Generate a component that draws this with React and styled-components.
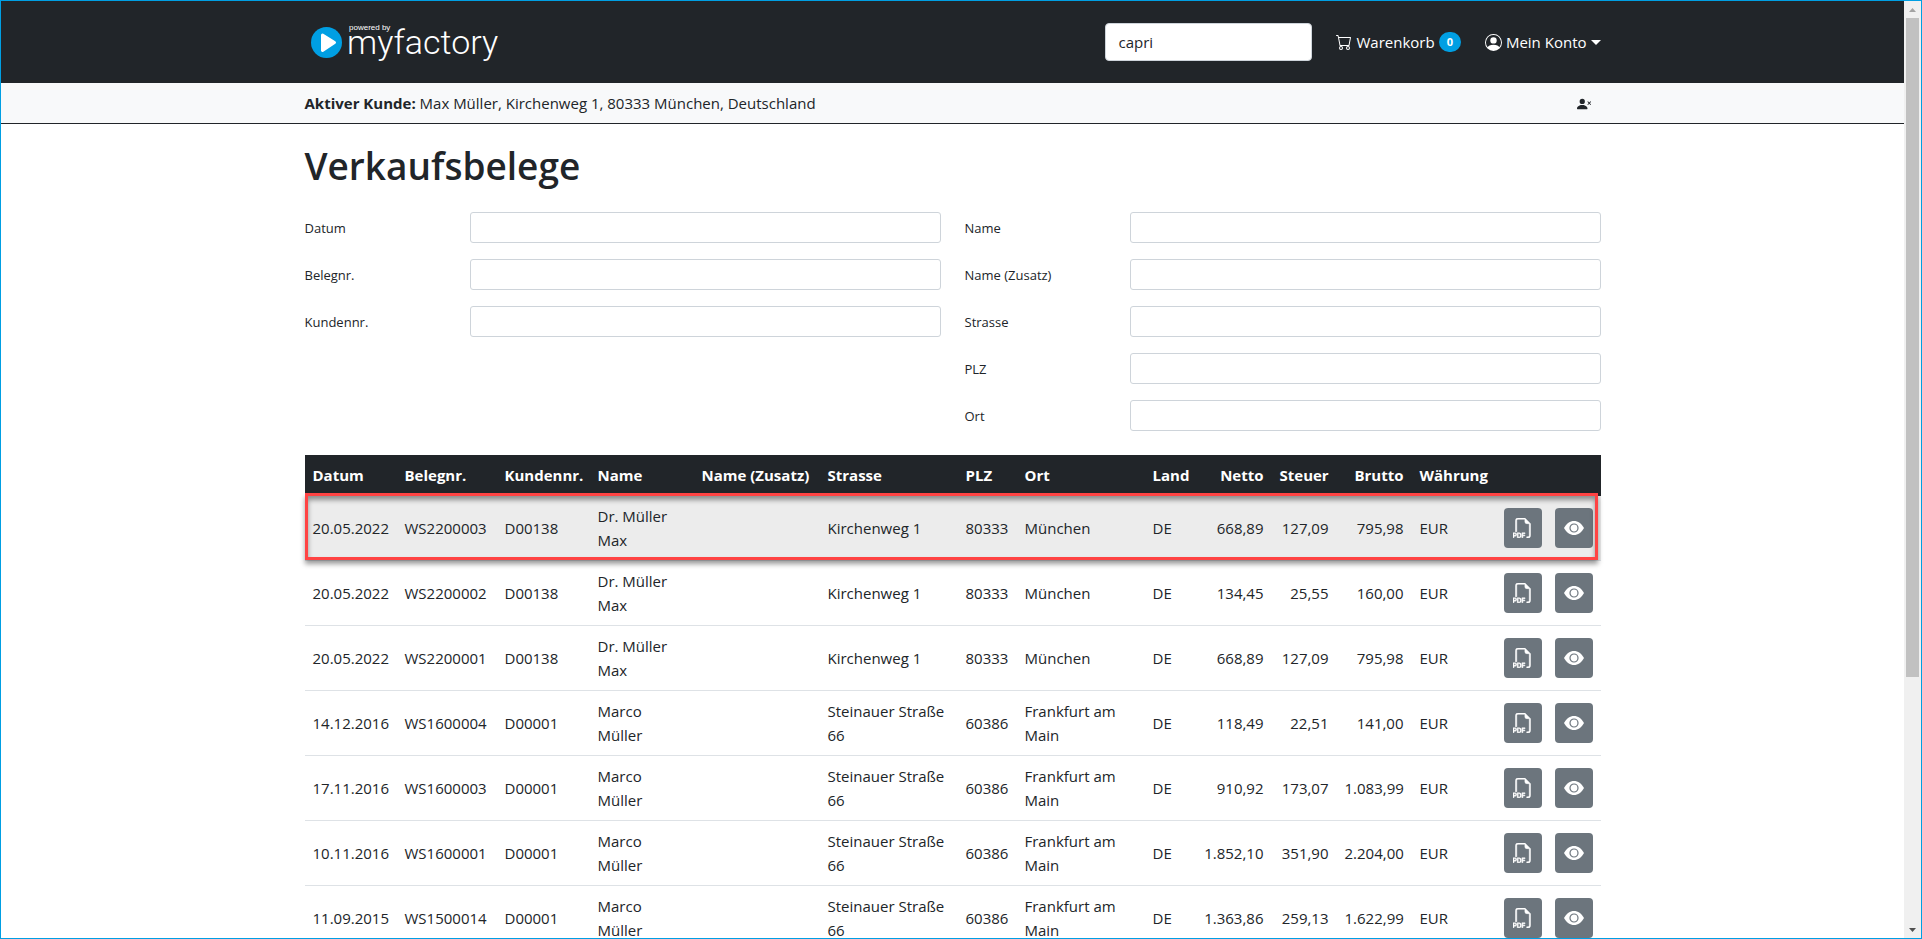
import { useState } from "react";
import styled, { createGlobalStyle } from "styled-components";
import {
  BsCart,
  BsFiletypePdf,
  BsPersonCircle,
  BsPersonXFill,
} from "react-icons/bs";

const GlobalStyle = createGlobalStyle`
  *, *::before, *::after {
    box-sizing: border-box;
  }

  body {
    margin: 0;
    background: #fff;
    color: #212529;
    font-family: "Open Sans", "Noto Sans", sans-serif;
    font-size: 15px;
    line-height: 24px;
  }

  input, button {
    font: inherit;
    color: inherit;
  }
`;

const StyledWindow = styled.div`
  display: flex;
  height: 100vh;
  border: 1px solid #009fe3;
`;

const StyledPage = styled.div`
  flex: 1;
  min-width: 0;
  overflow-y: auto;
  scrollbar-width: none;
`;

const StyledContainer = styled.div`
  width: 100%;
  max-width: 1320px;
  margin: 0 auto;
  padding: 0 12px;
`;

const StyledHeader = styled.header`
  background: #212529;
  color: #fff;
`;

const StyledNavbar = styled(StyledContainer)`
  display: flex;
  align-items: center;
  height: 82px;
  padding-bottom: 14px;
  padding-top: 14px;
`;

const StyledLogo = styled.a`
  display: flex;
  margin-right: auto;
`;

const StyledSearch = styled.input`
  width: 207px;
  height: 38px;
  margin-right: 24px;
  padding: 6px 12px;
  border: 1px solid #ced4da;
  border-radius: 4px;
  background: #fff;
  color: #212529;
`;

const StyledNavLink = styled.a`
  display: flex;
  align-items: center;
  gap: 4px;
  color: #fff;
  text-decoration: none;

  & + & {
    margin-left: 24px;
  }
`;

const StyledBadge = styled.span`
  padding: 4px 8px;
  border-radius: 10px;
  background: #009fe3;
  font-size: 11px;
  font-weight: 700;
  line-height: 12px;
`;

const StyledCaret = styled.span`
  border-top: 5px solid;
  border-right: 5px solid transparent;
  border-left: 5px solid transparent;
`;

const StyledCustomerBar = styled.div`
  border-bottom: 1px solid #212529;
  background: #f8f9fa;
`;

const StyledCustomer = styled(StyledContainer)`
  display: flex;
  align-items: center;
  justify-content: space-between;
  height: 40px;
`;

const StyledClearButton = styled.button`
  display: flex;
  padding: 6px 10px 4px;
  border: 0;
  background: none;
`;

const StyledHeading = styled.h1`
  margin: 0;
  padding: 18px 0 22px;
  font-size: 37px;
  font-weight: 600;
  line-height: 48px;
`;

const StyledFilters = styled.form`
  display: grid;
  grid-template-columns: 1fr 1fr;
  gap: 24px;
  margin-bottom: 24px;
`;

const StyledFilterColumn = styled.div`
  display: flex;
  flex-direction: column;
  gap: 16px;
`;

const StyledField = styled.div`
  display: grid;
  grid-template-columns: 165px 1fr;
  align-items: center;
  font-size: 13px;
`;

const StyledInput = styled.input`
  width: 100%;
  height: 31px;
  padding: 4px 8px;
  border: 1px solid #ced4da;
  border-radius: 3px;
`;

const StyledTableWrapper = styled.div`
  position: relative;
  margin-bottom: 24px;
`;

const StyledTable = styled.table`
  width: 100%;
  table-layout: fixed;
  border-collapse: separate;
  border-spacing: 0;
`;

const StyledCol = styled.col`
  width: ${({ $width }) => $width}px;
`;

const StyledTh = styled.th`
  padding: 8px;
  border-bottom: 1px solid #212529;
  background: #212529;
  color: #fff;
  font-weight: 700;
  text-align: ${({ $right }) => ($right ? "right" : "left")};
  white-space: nowrap;
`;

const StyledTd = styled.td`
  padding: 8px;
  border-bottom: 1px solid #dee2e6;
  text-align: ${({ $right }) => ($right ? "right" : "left")};
  vertical-align: middle;
`;

const StyledRow = styled.tr`
  background: ${({ $active }) => ($active ? "#ececec" : "#fff")};
`;

const StyledActions = styled.div`
  display: flex;
  gap: 13px;
`;

const StyledIconButton = styled.button`
  display: flex;
  align-items: center;
  justify-content: center;
  width: 38px;
  height: 40px;
  padding: 0;
  border: 0;
  border-radius: 4px;
  background: #6c757d;
  color: #fff;
  cursor: pointer;

  &:hover {
    background: #5c636a;
  }
`;

const StyledPdfIcon = styled(BsFiletypePdf)`
  stroke: currentColor;
  stroke-width: 0.4px;
`;

// sits on top of the first row
const StyledMarker = styled.div`
  position: absolute;
  top: 38px;
  left: 0;
  right: 3px;
  height: 67px;
  border: 3px solid #ff4343;
  box-shadow:
    0 4px 5px rgba(0, 0, 0, 0.4),
    inset 0 4px 5px rgba(0, 0, 0, 0.4);
  pointer-events: none;
`;

const StyledScrollbar = styled.div`
  display: flex;
  flex-direction: column;
  align-items: center;
  width: 17px;
  background: #f0f0f0;
`;

const StyledArrow = styled.div`
  display: flex;
  align-items: center;
  justify-content: center;
  height: 17px;
  color: ${({ $disabled }) => ($disabled ? "#a3a3a3" : "#505050")};
`;

const StyledTrack = styled.div`
  flex: 1;
  width: 13px;
`;

const StyledThumb = styled.div`
  height: 73%;
  background: #c1c1c1;
`;

const leftFilters = [
  { id: "datum", label: "Datum" },
  { id: "belegnr", label: "Belegnr." },
  { id: "kundennr", label: "Kundennr." },
];

const rightFilters = [
  { id: "name", label: "Name" },
  { id: "zusatz", label: "Name (Zusatz)" },
  { id: "strasse", label: "Strasse" },
  { id: "plz", label: "PLZ" },
  { id: "ort", label: "Ort" },
];

const columns = [
  { key: "datum", label: "Datum", width: 92 },
  { key: "belegnr", label: "Belegnr.", width: 100 },
  { key: "kundennr", label: "Kundennr.", width: 93 },
  { key: "name", label: "Name", width: 104 },
  { key: "zusatz", label: "Name (Zusatz)", width: 126 },
  { key: "strasse", label: "Strasse", width: 138 },
  { key: "plz", label: "PLZ", width: 59 },
  { key: "ort", label: "Ort", width: 128 },
  { key: "land", label: "Land", width: 46 },
  { key: "netto", label: "Netto", width: 81, right: true },
  { key: "steuer", label: "Steuer", width: 65, right: true },
  { key: "brutto", label: "Brutto", width: 75, right: true },
  { key: "waehrung", label: "Währung", width: 84 },
];

const max = {
  kundennr: "D00138",
  name: "Dr. Müller Max",
  strasse: "Kirchenweg 1",
  plz: "80333",
  ort: "München",
  land: "DE",
  waehrung: "EUR",
};

const marco = {
  kundennr: "D00001",
  name: "Marco Müller",
  strasse: "Steinauer Straße 66",
  plz: "60386",
  ort: "Frankfurt am Main",
  land: "DE",
  waehrung: "EUR",
};

const belege = [
  { ...max, datum: "20.05.2022", belegnr: "WS2200003", netto: "668,89", steuer: "127,09", brutto: "795,98" },
  { ...max, datum: "20.05.2022", belegnr: "WS2200002", netto: "134,45", steuer: "25,55", brutto: "160,00" },
  { ...max, datum: "20.05.2022", belegnr: "WS2200001", netto: "668,89", steuer: "127,09", brutto: "795,98" },
  { ...marco, datum: "14.12.2016", belegnr: "WS1600004", netto: "118,49", steuer: "22,51", brutto: "141,00" },
  { ...marco, datum: "17.11.2016", belegnr: "WS1600003", netto: "910,92", steuer: "173,07", brutto: "1.083,99" },
  { ...marco, datum: "10.11.2016", belegnr: "WS1600001", netto: "1.852,10", steuer: "351,90", brutto: "2.204,00" },
  { ...marco, datum: "11.09.2015", belegnr: "WS1500014", netto: "1.363,86", steuer: "259,13", brutto: "1.622,99" },
];

export default function App() {
  const [search, setSearch] = useState("capri");

  return (
    <StyledWindow>
      <GlobalStyle />
      <StyledPage>
        <StyledHeader>
          <StyledNavbar as="nav">
            <StyledLogo href="#" aria-label="myfactory">
              <Logo />
            </StyledLogo>
            <StyledSearch
              type="text"
              aria-label="Suche"
              value={search}
              onChange={(event) => setSearch(event.target.value)}
            />
            <StyledNavLink href="#">
              <BsCart size={16} />
              Warenkorb
              <StyledBadge>0</StyledBadge>
            </StyledNavLink>
            <StyledNavLink href="#">
              <BsPersonCircle size={17} />
              Mein Konto
              <StyledCaret />
            </StyledNavLink>
          </StyledNavbar>
        </StyledHeader>

        <StyledCustomerBar>
          <StyledCustomer>
            <span>
              <strong>Aktiver Kunde:</strong> Max Müller, Kirchenweg 1, 80333
              München, Deutschland
            </span>
            <StyledClearButton type="button" aria-label="Kunde abwählen">
              <BsPersonXFill size={14} />
            </StyledClearButton>
          </StyledCustomer>
        </StyledCustomerBar>

        <StyledContainer as="main">
          <StyledHeading>Verkaufsbelege</StyledHeading>
          <StyledFilters>
            <FilterColumn fields={leftFilters} />
            <FilterColumn fields={rightFilters} />
          </StyledFilters>
          <BelegTable />
        </StyledContainer>
      </StyledPage>
      <Scrollbar />
    </StyledWindow>
  );
}

function Logo() {
  return (
    <svg width="200" height="54" viewBox="0 0 200 54">
      <circle cx="21.5" cy="27.5" r="15.5" fill="#009fe3" />
      <path
        d="M17.5 20 L29.5 27.5 L17.5 35.5 Z"
        fill="#fff"
        stroke="#fff"
        strokeWidth="3"
        strokeLinejoin="round"
      />
      <text
        x="44"
        y="15"
        fill="#fff"
        fontFamily="Liberation Sans, sans-serif"
        fontSize="8"
      >
        powered by
      </text>
      <text
        x="42"
        y="39"
        fill="#fff"
        fontFamily="Roboto, sans-serif"
        fontSize="34"
        fontWeight="300"
      >
        myfactory
      </text>
    </svg>
  );
}

function EyeIcon() {
  return (
    <svg width="20" height="14" viewBox="0 0 20 14" fill="none">
      <path
        d="M0 7 C2.5 2.5 6 0 10 0 S17.5 2.5 20 7 C17.5 11.5 14 14 10 14 S2.5 11.5 0 7 Z"
        fill="currentColor"
      />
      <circle cx="10" cy="7" r="4" stroke="#6c757d" strokeWidth="1.2" />
    </svg>
  );
}

function FilterColumn({ fields }) {
  return (
    <StyledFilterColumn>
      {fields.map(({ id, label }) => (
        <StyledField key={id}>
          <label htmlFor={id}>{label}</label>
          <StyledInput type="text" id={id} />
        </StyledField>
      ))}
    </StyledFilterColumn>
  );
}

function BelegTable() {
  return (
    <StyledTableWrapper>
      <StyledTable>
        <colgroup>
          {columns.map(({ key, width }) => (
            <StyledCol key={key} $width={width} />
          ))}
          <StyledCol $width={105} />
        </colgroup>
        <thead>
          <tr>
            {columns.map(({ key, label, right }) => (
              <StyledTh key={key} $right={right}>
                {label}
              </StyledTh>
            ))}
            <StyledTh />
          </tr>
        </thead>
        <tbody>
          {belege.map((beleg, index) => (
            <StyledRow key={beleg.belegnr} $active={index === 0}>
              {columns.map(({ key, right }) => (
                <StyledTd key={key} $right={right}>
                  {beleg[key]}
                </StyledTd>
              ))}
              <StyledTd>
                <StyledActions>
                  <StyledIconButton type="button" aria-label="PDF öffnen">
                    <StyledPdfIcon size={20} />
                  </StyledIconButton>
                  <StyledIconButton type="button" aria-label="Beleg ansehen">
                    <EyeIcon />
                  </StyledIconButton>
                </StyledActions>
              </StyledTd>
            </StyledRow>
          ))}
        </tbody>
      </StyledTable>
      <StyledMarker />
    </StyledTableWrapper>
  );
}

function Scrollbar() {
  return (
    <StyledScrollbar aria-hidden="true">
      <StyledArrow $disabled>
        <svg width="7" height="4" viewBox="0 0 7 4">
          <path d="M0 4 L3.5 0 L7 4 Z" fill="currentColor" />
        </svg>
      </StyledArrow>
      <StyledTrack>
        <StyledThumb />
      </StyledTrack>
      <StyledArrow>
        <svg width="7" height="4" viewBox="0 0 7 4">
          <path d="M0 0 L3.5 4 L7 0 Z" fill="currentColor" />
        </svg>
      </StyledArrow>
    </StyledScrollbar>
  );
}
